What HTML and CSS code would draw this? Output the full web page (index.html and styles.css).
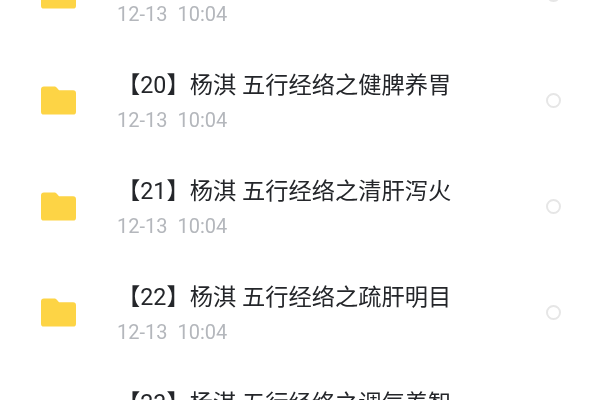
FILE: index.html
```html
<!DOCTYPE html>
<html lang="zh">
<head>
<meta charset="utf-8">
<title>文件列表</title>
<link rel="stylesheet" href="styles.css">
</head>
<body>
<ul class="list">
  <li class="row">
    <svg class="folder" viewBox="0 0 36 29"><path d="M3 0h10.5c1.2 0 2 .5 2.8 1.3L18.5 4H33a3 3 0 0 1 3 3v19a3 3 0 0 1-3 3H3a3 3 0 0 1-3-3V3a3 3 0 0 1 3-3z"/></svg>
    <div class="info"><div class="title">【19】杨淇 五行经络之养心安神</div><div class="meta">12-13&nbsp; 10:04</div></div>
    <span class="radio"></span>
  </li>
  <li class="row">
    <svg class="folder" viewBox="0 0 36 29"><path d="M3 0h10.5c1.2 0 2 .5 2.8 1.3L18.5 4H33a3 3 0 0 1 3 3v19a3 3 0 0 1-3 3H3a3 3 0 0 1-3-3V3a3 3 0 0 1 3-3z"/></svg>
    <div class="info"><div class="title">【20】杨淇 五行经络之健脾养胃</div><div class="meta">12-13&nbsp; 10:04</div></div>
    <span class="radio"></span>
  </li>
  <li class="row">
    <svg class="folder" viewBox="0 0 36 29"><path d="M3 0h10.5c1.2 0 2 .5 2.8 1.3L18.5 4H33a3 3 0 0 1 3 3v19a3 3 0 0 1-3 3H3a3 3 0 0 1-3-3V3a3 3 0 0 1 3-3z"/></svg>
    <div class="info"><div class="title">【21】杨淇 五行经络之清肝泻火</div><div class="meta">12-13&nbsp; 10:04</div></div>
    <span class="radio"></span>
  </li>
  <li class="row">
    <svg class="folder" viewBox="0 0 36 29"><path d="M3 0h10.5c1.2 0 2 .5 2.8 1.3L18.5 4H33a3 3 0 0 1 3 3v19a3 3 0 0 1-3 3H3a3 3 0 0 1-3-3V3a3 3 0 0 1 3-3z"/></svg>
    <div class="info"><div class="title">【22】杨淇 五行经络之疏肝明目</div><div class="meta">12-13&nbsp; 10:04</div></div>
    <span class="radio"></span>
  </li>
  <li class="row">
    <svg class="folder" viewBox="0 0 36 29"><path d="M3 0h10.5c1.2 0 2 .5 2.8 1.3L18.5 4H33a3 3 0 0 1 3 3v19a3 3 0 0 1-3 3H3a3 3 0 0 1-3-3V3a3 3 0 0 1 3-3z"/></svg>
    <div class="info"><div class="title">【23】杨淇 五行经络之调气养智</div><div class="meta">12-13&nbsp; 10:04</div></div>
    <span class="radio"></span>
  </li>
</ul>
</body>
</html>
```

FILE: styles.css
```css
html, body {
  margin: 0;
  height: 400px;
  overflow: hidden;
  background: #fff;
}
.list {
  list-style: none;
  margin: -59px 0 0;
  padding: 0;
  filter: blur(0.6px);
}
.row {
  display: flex;
  align-items: center;
  height: 106px;
  padding: 0 39px 0 41px;
}
.folder {
  width: 35px;
  height: 29px;
  fill: #fdd445;
  flex: none;
}
.info {
  flex: 1;
  margin: 3px 0 0 41px;
  display: flex;
  flex-direction: column;
  gap: 10px;
}
.title {
  font: 23.25px/26px Roboto, "Noto Sans CJK SC", sans-serif;
  color: #24262a;
  white-space: nowrap;
}
.meta {
  font: 20px/24px Roboto, "Noto Sans CJK SC", sans-serif;
  color: #b4b7bc;
  white-space: pre;
}
.radio {
  width: 11px;
  height: 11px;
  border: 2px solid #e6e6e6;
  border-radius: 50%;
  flex: none;
}
```
